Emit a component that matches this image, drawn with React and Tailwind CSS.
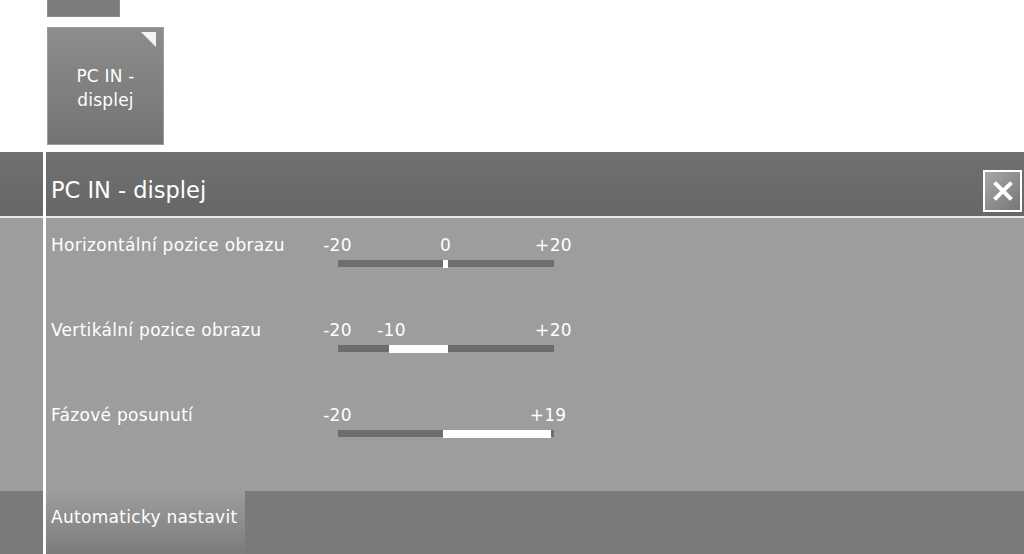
import React from "react";

const rows = [
  { label: "Horizontální pozice obrazu", value: 0, ticks: [[-20, "-20"], [0, "0"], [20, "+20"]] },
  { label: "Vertikální pozice obrazu", value: -10, ticks: [[-20, "-20"], [-10, "-10"], [20, "+20"]] },
  { label: "Fázové posunutí", value: 19, ticks: [[-20, "-20"], [19, "+19"]] },
];

const pos = (v) => (v + 20) * 5.4;

const Slider = ({ value, ticks }) => {
  const lo = Math.min(value, 0);
  const hi = Math.max(value, 0);
  const left = pos(lo) - 3;
  const width = pos(hi) - pos(lo) + 5;
  return (
    <div className="relative w-[216px] h-[34px]">
      {ticks.map(([v, t]) => (
        <span
          key={t}
          className="absolute top-0 -translate-x-1/2 text-[17px] leading-[20px] tracking-[0.3px] text-white"
          style={{ left: pos(v) - 0.5 }}
        >
          {t}
        </span>
      ))}
      <div className="absolute left-0 top-[25px] w-[216px] h-[7px] bg-[#6d6d6d]" />
      <div
        className="absolute top-[24.5px] h-[8.5px] bg-white"
        style={{ left, width }}
      />
    </div>
  );
};

export default function App() {
  return (
    <div
      className="w-[1024px] h-[554px] overflow-hidden bg-white flex flex-col"
      style={{ fontFamily: '"DejaVu Sans", sans-serif' }}
    >
      <div className="h-[152px] pl-[47px] flex flex-col">
        <div className="w-[73px] h-[17px] bg-[#7c7c7c] border-x border-b border-[#8e8e8e]" />
        <div className="relative mt-[10px] w-[117px] h-[118px] bg-gradient-to-b from-[#8d8d8d] to-[#747474] border border-[#9c9c9c] flex items-center justify-center text-center text-white text-[17px] leading-[24px] tracking-[0.2px]">
          <svg className="absolute top-[4px] right-[6px]" width="16" height="16" viewBox="0 0 16 16">
            <polygon points="0,0 15,0 15,15" fill="#f4f4f4" />
          </svg>
          <span className="pt-[3px]">
            PC IN -<br />displej
          </span>
        </div>
      </div>

      <div className="flex-1 flex">
        <div className="w-[43px] flex flex-col">
          <div className="h-[64px] bg-gradient-to-b from-[#707070] to-[#676767]" />
          <div className="h-[2px] bg-[#e8e8e8]" />
          <div className="h-[273px] bg-[#9d9d9d]" />
          <div className="flex-1 bg-[#7a7a7a]" />
        </div>
        <div className="w-[3px] bg-white" />
        <div className="flex-1 flex flex-col">
          <div className="h-[64px] bg-gradient-to-b from-[#707070] to-[#676767] flex justify-between">
            <div className="pl-[5px] pt-[25px] text-[22.5px] leading-[27px] text-white">PC IN - displej</div>
            <div className="mt-[18px] mr-[2px] w-[39px] h-[42px] border-2 border-white bg-gradient-to-br from-[#a8a8a8] to-[#767676] flex items-center justify-center">
              <svg width="20" height="20" viewBox="0 0 20 20">
                <path d="M3 3 L17 17 M17 3 L3 17" stroke="white" strokeWidth="4" strokeLinecap="square" />
              </svg>
            </div>
          </div>
          <div className="h-[2px] bg-[#e8e8e8]" />
          <div className="h-[273px] bg-[#9d9d9d] pt-[17px] flex flex-col">
            {rows.map((r) => (
              <div key={r.label} className="h-[85px] flex">
                <div className="w-[292px] pl-[5px] text-[17px] leading-[20px] tracking-[0.3px] text-white">{r.label}</div>
                <Slider value={r.value} ticks={r.ticks} />
              </div>
            ))}
          </div>
          <div className="flex-1 bg-[#7a7a7a] flex">
            <div className="w-[199px] bg-gradient-to-b from-[#9d9d9d] to-[#7c7c7c] pl-[5px] pt-[16px] text-[17px] leading-[20px] tracking-[0.3px] text-white whitespace-nowrap">
              Automaticky nastavit
            </div>
          </div>
        </div>
      </div>
    </div>
  );
}
